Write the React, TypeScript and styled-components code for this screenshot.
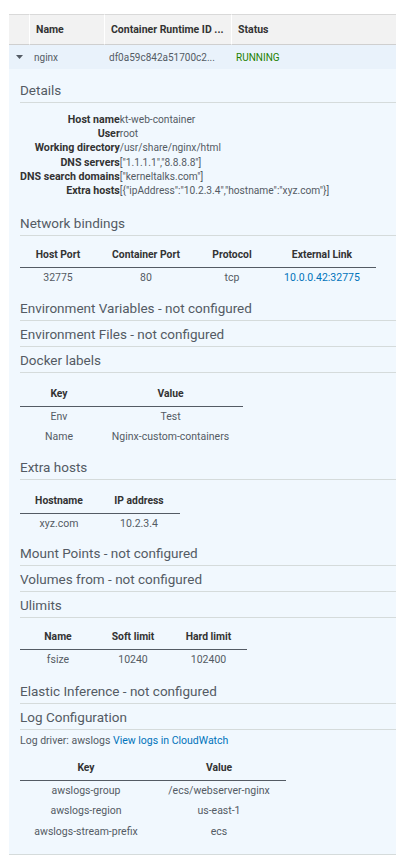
import React from "react";
import styled, { createGlobalStyle } from "styled-components";

const GlobalStyle = createGlobalStyle`
  html, body { margin: 0; padding: 0; background: #ffffff; }
  body {
    font-family: Roboto, "Liberation Sans", Arial, sans-serif;
    color: #545b64;
  }
`;

const Page = styled.div`
  padding: 14px 0 0 9px;
  overflow: hidden;
`;

const RowGrid = styled.div`
  display: grid;
  grid-template-columns: 20px 75px 127px 1fr;
`;

const HeadCell = styled.div<{ $first?: boolean }>`
  height: 29px;
  background: #f2f2f2;
  border-top: 1px solid #d9d9d9;
  border-bottom: 1px solid #cfcfcf;
  border-left: ${(p) => (p.$first ? "none" : "1px solid #ffffff")};
  padding-left: 6px;
  display: flex;
  align-items: center;
  font-size: 10.5px;
  font-weight: 700;
  color: #333333;
  white-space: nowrap;
  overflow: hidden;
`;

const BodyCell = styled.div<{ $status?: boolean; $center?: boolean }>`
  height: 24px;
  background: #e9f2fb;
  padding-left: ${(p) => (p.$center ? "0" : "5px")};
  display: flex;
  align-items: center;
  justify-content: ${(p) => (p.$center ? "center" : "flex-start")};
  font-size: 10px;
  color: ${(p) => (p.$status ? "#1d8102" : "#545b64")};
  white-space: nowrap;
  overflow: hidden;
`;

const Panel = styled.div`
  background: #f1f8fe;
  padding: 8px 0 6px 11px;
  border-bottom: 1px solid #d5dbdb;
`;

const Heading = styled.div`
  font-size: 13.5px;
  line-height: 16px;
  padding: 5px 0 4px;
  border-bottom: 1px solid #d5dbdb;
  color: #545b64;
  white-space: nowrap;
`;

const DetailGrid = styled.div`
  display: grid;
  grid-template-columns: max-content 1fr;
  margin: 10px 0 12px;
  line-height: 14.2px;
`;

const DetailLabel = styled.div`
  text-align: right;
  font-size: 10.67px;
  font-weight: 700;
  color: #333333;
  white-space: nowrap;
`;

const DetailValue = styled.div`
  font-size: 10.2px;
  color: #545b64;
  white-space: nowrap;
`;

const DataTable = styled.table<{ $top: number; $bottom: number }>`
  border-collapse: separate;
  border-spacing: 0;
  table-layout: fixed;
  margin: ${(p) => p.$top}px 0 ${(p) => p.$bottom}px;
`;

const Col = styled.col<{ $w: number }>`
  width: ${(p) => p.$w}px;
`;

const Th = styled.th`
  padding: 4px 0 5px;
  line-height: 14px;
  font-size: 10.35px;
  border-bottom: 1px solid #545b64;
  font-weight: 700;
  color: #333333;
  text-align: center;
  white-space: nowrap;
`;

const Td = styled.td`
  padding: 0;
  height: 20.5px;
  line-height: 14px;
  font-size: 10.5px;
  text-align: center;
  color: #545b64;
  white-space: nowrap;
`;

const Link = styled.a`
  color: #0073bb;
  text-decoration: none;
`;

const LogDriver = styled.div`
  margin-top: 4px;
  font-size: 10.5px;
  line-height: 14px;
  color: #545b64;
`;

const Caret = () => (
  <svg width="7" height="4" viewBox="0 0 7 4">
    <path d="M0 0 H7 L3.5 4 Z" fill="#545b64" />
  </svg>
);

type TableProps = {
  widths: number[];
  head: string[];
  rows: React.ReactNode[][];
  top?: number;
  bottom?: number;
};

const KVTable = ({ widths, head, rows, top = 8, bottom = 6 }: TableProps) => (
  <DataTable $top={top} $bottom={bottom}>
    <colgroup>
      {widths.map((w, i) => (
        <Col key={i} $w={w} />
      ))}
    </colgroup>
    <thead>
      <tr>
        {head.map((h) => (
          <Th key={h}>{h}</Th>
        ))}
      </tr>
    </thead>
    <tbody>
      {rows.map((r, i) => (
        <tr key={i}>
          {r.map((c, j) => (
            <Td key={j}>{c}</Td>
          ))}
        </tr>
      ))}
    </tbody>
  </DataTable>
);

const details: [string, string][] = [
  ["Host name", "kt-web-container"],
  ["User", "root"],
  ["Working directory", "/usr/share/nginx/html"],
  ["DNS servers", '["1.1.1.1","8.8.8.8"]'],
  ["DNS search domains", '["kerneltalks.com"]'],
  ["Extra hosts", '[{"ipAddress":"10.2.3.4","hostname":"xyz.com"}]'],
];

export default function App() {
  return (
    <>
      <GlobalStyle />
      <Page>
        <RowGrid>
          <HeadCell $first />
          <HeadCell>Name</HeadCell>
          <HeadCell>Container Runtime ID ...</HeadCell>
          <HeadCell>Status</HeadCell>
          <BodyCell $center>
            <Caret />
          </BodyCell>
          <BodyCell>nginx</BodyCell>
          <BodyCell>df0a59c842a51700c2...</BodyCell>
          <BodyCell $status>RUNNING</BodyCell>
        </RowGrid>
        <Panel>
          <Heading>Details</Heading>
          <DetailGrid>
            {details.map(([k, v]) => (
              <React.Fragment key={k}>
                <DetailLabel>{k}</DetailLabel>
                <DetailValue>{v}</DetailValue>
              </React.Fragment>
            ))}
          </DetailGrid>

          <Heading>Network bindings</Heading>
          <KVTable
            widths={[76, 100, 72, 108]}
            head={["Host Port", "Container Port", "Protocol", "External Link"]}
            rows={[["32775", "80", "tcp", <Link href="#">10.0.0.42:32775</Link>]]}
          />

          <Heading>Environment Variables - not configured</Heading>
          <Heading>Environment Files - not configured</Heading>

          <Heading>Docker labels</Heading>
          <KVTable
            top={10}
            widths={[78, 145]}
            head={["Key", "Value"]}
            rows={[
              ["Env", "Test"],
              ["Name", "Nginx-custom-containers"],
            ]}
          />

          <Heading>Extra hosts</Heading>
          <KVTable
            top={10}
            widths={[78, 82]}
            head={["Hostname", "IP address"]}
            rows={[["xyz.com", "10.2.3.4"]]}
          />

          <Heading>Mount Points - not configured</Heading>
          <Heading>Volumes from - not configured</Heading>

          <Heading>Ulimits</Heading>
          <KVTable
            bottom={7}
            widths={[76, 74, 77]}
            head={["Name", "Soft limit", "Hard limit"]}
            rows={[["fsize", "10240", "102400"]]}
          />

          <Heading>Elastic Inference - not configured</Heading>
          <Heading>Log Configuration</Heading>
          <LogDriver>
            Log driver: awslogs <Link href="#">View logs in CloudWatch</Link>
          </LogDriver>
          <KVTable
            top={9}
            widths={[132, 134]}
            head={["Key", "Value"]}
            rows={[
              ["awslogs-group", "/ecs/webserver-nginx"],
              ["awslogs-region", "us-east-1"],
              ["awslogs-stream-prefix", "ecs"],
            ]}
          />
        </Panel>
      </Page>
    </>
  );
}
